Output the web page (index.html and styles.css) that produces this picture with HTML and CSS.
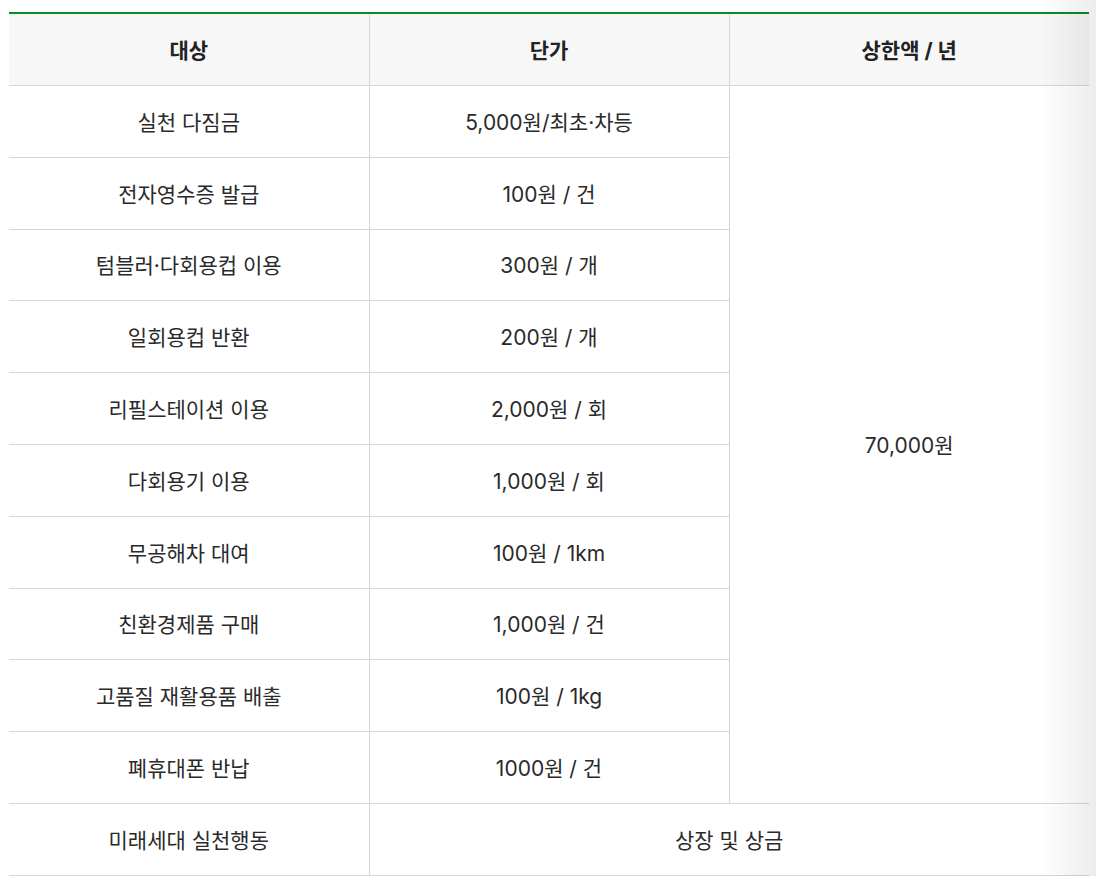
FILE: index.html
```html
<!DOCTYPE html>
<html lang="ko">
<head>
<meta charset="utf-8">
<link rel="stylesheet" href="styles.css">
</head>
<body>
<div class="wrap">
  <table class="tbl">
    <thead>
      <tr><th>대상</th><th>단가</th><th>상한액 / 년</th></tr>
    </thead>
    <tbody>
      <tr><td>실천 다짐금</td><td>5,000원/최초·차등</td><td rowspan="10">70,000원</td></tr>
      <tr><td>전자영수증 발급</td><td>100원 / 건</td></tr>
      <tr><td>텀블러·다회용컵 이용</td><td>300원 / 개</td></tr>
      <tr><td>일회용컵 반환</td><td>200원 / 개</td></tr>
      <tr><td>리필스테이션 이용</td><td>2,000원 / 회</td></tr>
      <tr><td>다회용기 이용</td><td>1,000원 / 회</td></tr>
      <tr><td>무공해차 대여</td><td>100원 / 1km</td></tr>
      <tr><td>친환경제품 구매</td><td>1,000원 / 건</td></tr>
      <tr><td>고품질 재활용품 배출</td><td>100원 / 1kg</td></tr>
      <tr><td>폐휴대폰 반납</td><td>1000원 / 건</td></tr>
      <tr><td>미래세대 실천행동</td><td colspan="2">상장 및 상금</td></tr>
    </tbody>
  </table>
  <div class="fade"></div>
</div>
</body>
</html>
```
FILE: styles.css
```css
html, body {
  margin: 0;
  padding: 0;
  background: #fff;
}
body {
  font-family: "Inter", "Noto Sans CJK KR", "Noto Sans", sans-serif;
  color: #222;
}
.wrap {
  position: relative;
  padding: 12px 7px 0 9px;
}
.tbl {
  width: 1080px;
  border-collapse: collapse;
  table-layout: fixed;
  border-top: 2px solid #0b8a2e;
}
.tbl th, .tbl td {
  border-bottom: 1px solid #d6d6d6;
  border-left: 1px solid #d6d6d6;
  text-align: center;
  vertical-align: middle;
  font-size: 21px;
  padding: 0 0 1px 0;
  letter-spacing: 0;
}
.tbl th:first-child, .tbl tbody tr td:first-child {
  border-left: none;
}
.tbl th {
  background: #f7f7f7;
  font-weight: 700;
  height: 70px;
  color: #222;
}
.tbl td {
  height: 69.8px;
  font-weight: 400;
  color: #2a2a2a;
}
.fade {
  position: absolute;
  top: 0;
  right: 0;
  width: 56px;
  height: 886px;
  background: linear-gradient(to right, rgba(0,0,0,0), rgba(0,0,0,0.075));
  pointer-events: none;
}
```
